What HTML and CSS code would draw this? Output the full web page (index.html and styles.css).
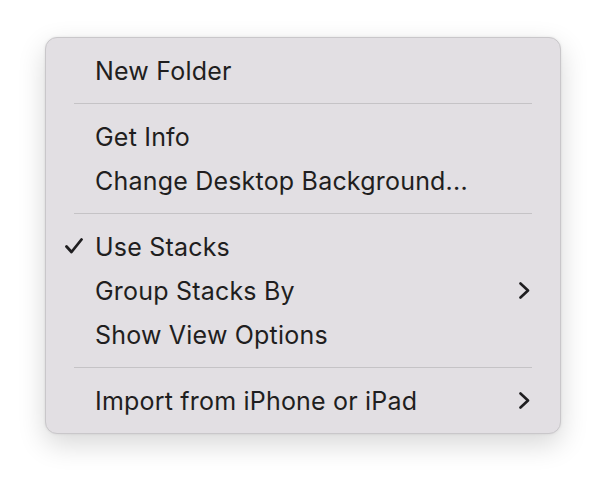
FILE: index.html
```html
<!DOCTYPE html>
<html lang="en">
<head>
<meta charset="UTF-8" />
<title>Desktop Menu</title>
<link rel="stylesheet" href="styles.css">
</head>
<body>
<div class="menu">
    <div class="item">New Folder</div>
    <div class="sep"></div>
    <div class="item">Get Info</div>
    <div class="item">Change Desktop Background...</div>
    <div class="sep"></div>
    <div class="item">
        <svg class="check" viewBox="0 0 18 16"><path d="M1.5 8.5 L6.5 14 L16.5 1.5" /></svg>
        Use Stacks
    </div>
    <div class="item">
        Group Stacks By
        <svg class="chevron" viewBox="0 0 11 17"><path d="M1.5 1.5 L9 8.5 L1.5 15.5" /></svg>
    </div>
    <div class="item">Show View Options</div>
    <div class="sep"></div>
    <div class="item">
        Import from iPhone or iPad
        <svg class="chevron" viewBox="0 0 11 17"><path d="M1.5 1.5 L9 8.5 L1.5 15.5" /></svg>
    </div>
</div>
</body>
</html>
```

FILE: styles.css
```css
html, body {
min-height: 100%;
}

body {
margin: 0;
padding: 37px 0 60px 45px;
background: #ffffff;
font-family: Inter, 'Noto Sans', sans-serif;
}

.menu {
width: 514px;
padding: 11px 0 10px;
background: #e2dfe3;
border: 1px solid #c9c7ca;
border-radius: 12px;
box-shadow: 0 10px 28px rgba(0, 0, 0, 0.16), 0 0 3px rgba(0, 0, 0, 0.08);
}

.item {
position: relative;
display: flex;
align-items: center;
height: 44px;
padding-left: 49px;
font-size: 25px;
color: #1f1e20;
letter-spacing: 0.2px;
}

.sep {
height: 1px;
margin: 10px 28px 11px;
background: #c5c3c6;
}

.check {
position: absolute;
left: 19px;
top: 13px;
width: 18px;
height: 16px;
fill: none;
stroke: #1f1e20;
stroke-width: 2.8;
stroke-linecap: round;
stroke-linejoin: round;
}

.chevron {
position: absolute;
right: 30px;
top: 13px;
width: 11px;
height: 17px;
fill: none;
stroke: #1f1e20;
stroke-width: 2.6;
stroke-linecap: round;
stroke-linejoin: round;
}
```
